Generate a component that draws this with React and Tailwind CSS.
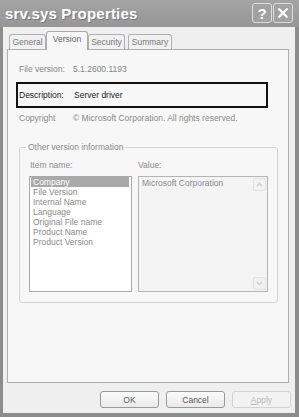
import React from "react";

const font = { fontFamily: '"Liberation Sans", Arial, sans-serif' };

function Tab({ label, selected, w }) {
  if (selected) {
    return (
      <div
        className={`relative z-10 -mb-px h-[19px] ${w} flex items-start justify-center pt-[2px] border border-b-0 border-[#a9a9a9] rounded-t-[3px] bg-[#f7f7f7] text-[#666] -mx-[1px]`}
      >
        {label}
      </div>
    );
  }
  return (
    <div
      className={`h-[15px] ${w} flex items-center justify-center border border-b-0 border-[#b0b0b0] rounded-t-[3px] bg-[#f1f1f1] text-[#7a7a7a]`}
    >
      {label}
    </div>
  );
}

function Btn({ children, disabled }) {
  return (
    <div
      className={`w-[59px] h-[17px] flex items-center justify-center rounded-[3px] border ${
        disabled
          ? "border-[#d2d2d2] text-[#b8b8b8] bg-[#f2f2f2]"
          : "border-[#9a9a9a] text-[#5a5a5a] bg-gradient-to-b from-[#fbfbfb] to-[#e9e9e9]"
      }`}
    >
      {children}
    </div>
  );
}

export default function App() {
  const items = [
    "Company",
    "File Version",
    "Internal Name",
    "Language",
    "Original File name",
    "Product Name",
    "Product Version",
  ];
  return (
    <div
      className="w-[299px] h-[417px] bg-[#8c8c8c] flex flex-col text-[8.5px] leading-[10px] overflow-hidden"
      style={font}
    >
      {/* Title bar */}
      <div className="h-[27px] shrink-0 flex items-center pl-[5px] pr-[6px] bg-gradient-to-b from-[#a4a4a4] to-[#969696]">
        <div className="text-white font-bold text-[15px] leading-[18px] tracking-[0.2px] [text-shadow:1px_1px_0_#7a7a7a]">
          srv.sys Properties
        </div>
        <div className="ml-auto flex gap-[1px] mt-[-1px]">
          <div className="w-[20px] h-[20px] rounded-[3px] border border-[#dcdcdc] bg-[#a2a2a2] flex items-center justify-center text-white font-bold text-[15px] leading-none">
            ?
          </div>
          <div className="w-[20px] h-[20px] rounded-[3px] border border-[#dcdcdc] bg-[#a2a2a2] flex items-center justify-center">
            <svg width="12" height="12" viewBox="0 0 12 12">
              <path d="M1.5 1.5 L10.5 10.5 M10.5 1.5 L1.5 10.5" stroke="#fff" strokeWidth="2.2" />
            </svg>
          </div>
        </div>
      </div>

      {/* Body */}
      <div className="flex-1 ml-[3px] mr-[4px] mb-[4px] bg-[#efefef] flex flex-col pt-[5px] pl-[4px] pr-[6px]">
        {/* Tabs */}
        <div className="flex items-end pl-[2px] gap-[1px] h-[17px]">
          <Tab label="General" w="w-[37px]" />
          <Tab label="Version" w="w-[42px]" selected />
          <Tab label="Security" w="w-[37px]" />
          <div className="w-[1px]" />
          <Tab label="Summary" w="w-[44px]" />
        </div>

        {/* Panel */}
        <div className="h-[334px] border border-[#aeaeae] bg-[#f7f7f7] flex flex-col">
          <div className="flex h-[10px] mt-[14px] pl-[11px] text-[#858585]">
            <div className="w-[54px]">File version:</div>
            <div>5.1.2600.1193</div>
          </div>

          <div className="ml-[8px] mt-[8px] w-[252px] h-[26px] border-2 border-[#111] flex items-center pl-[1px] text-[#222]">
            <div className="w-[55px]">Description:</div>
            <div>Server driver</div>
          </div>

          <div className="flex h-[10px] mt-[5px] pl-[11px] text-[#8a8a8a]">
            <div className="w-[54px]">Copyright</div>
            <div>© Microsoft Corporation. All rights reserved.</div>
          </div>

          {/* Group box */}
          <div className="relative ml-[11px] mt-[24px] w-[259px] h-[156px] border border-[#d6d6d6] rounded-[3px] pt-[12px] pl-[9px]">
            <div className="absolute left-[6px] top-[-6px] px-[2px] bg-[#f7f7f7] text-[#8a8a8a]">
              Other version information
            </div>
            <div className="flex text-[#8a8a8a] h-[10px]">
              <div className="w-[109px] pl-[1px]">Item name:</div>
              <div>Value:</div>
            </div>
            <div className="flex gap-[6px] mt-[6px]">
              <div className="w-[103px] h-[116px] border border-[#a8a8a8] bg-white pl-[1px] pr-[2px] pt-0">
                {items.map((it, i) => (
                  <div
                    key={it}
                    className={`h-[10px] pl-[2px] ${
                      i === 0 ? "bg-[#a9a9a9] text-white" : "text-[#8a8a8a]"
                    }`}
                  >
                    {it}
                  </div>
                ))}
              </div>
              <div className="w-[130px] h-[116px] border border-[#b4b4b4] bg-[#f4f4f4] flex">
                <div className="flex-1 pl-[3px] pt-[1px] text-[#8a8a8a]">Microsoft Corporation</div>
                <div className="w-[13px] mr-[1px] flex flex-col justify-between py-[1px]">
                  <div className="h-[13px] border border-[#e2e2e2] rounded-[2px] bg-[#f2f2f2] flex items-center justify-center">
                    <svg width="7" height="5" viewBox="0 0 7 5">
                      <path d="M1 4 L3.5 1.5 L6 4" stroke="#d0d0d0" strokeWidth="1.3" fill="none" />
                    </svg>
                  </div>
                  <div className="h-[13px] border border-[#e2e2e2] rounded-[2px] bg-[#f2f2f2] flex items-center justify-center">
                    <svg width="7" height="5" viewBox="0 0 7 5">
                      <path d="M1 1 L3.5 3.5 L6 1" stroke="#d0d0d0" strokeWidth="1.3" fill="none" />
                    </svg>
                  </div>
                </div>
              </div>
            </div>
          </div>
        </div>

        {/* Buttons */}
        <div className="flex justify-end gap-[7px] mt-[8px] mr-[-2px]">
          <Btn>OK</Btn>
          <Btn>Cancel</Btn>
          <Btn disabled>
            <span>
              <span className="underline">A</span>pply
            </span>
          </Btn>
        </div>
      </div>
    </div>
  );
}
